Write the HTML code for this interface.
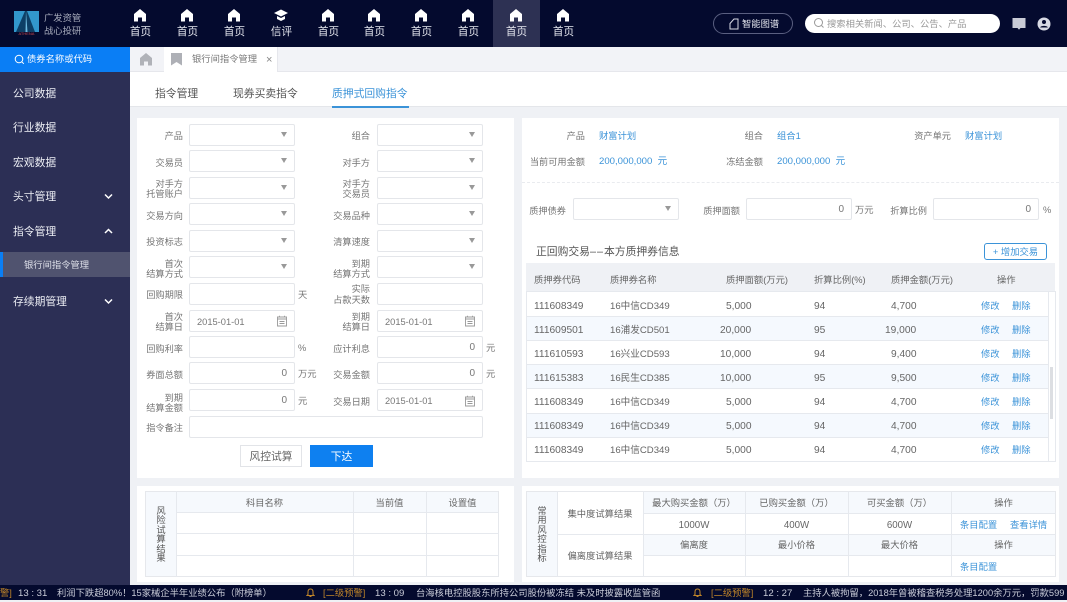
<!DOCTYPE html>
<html lang="zh"><head><meta charset="utf-8"><title>银行间指令管理</title>
<style>
*{box-sizing:border-box}
html,body{margin:0;padding:0}
body{width:1067px;height:600px;overflow:hidden;position:relative;background:#eff1f5;font-family:"Liberation Sans","Noto Sans CJK SC",sans-serif;font-size:9.3px;color:#666}
div,span,svg{position:absolute}
span span,div span{position:static}
.t{white-space:nowrap}
.nav{top:0;width:47px;height:47px;color:#e4e6ee;font-size:10.6px;text-align:center}
.nav svg{left:16px;top:8px}
.nav b{position:absolute;left:0;width:47px;top:24px;font-weight:400;line-height:16px}
.m{left:13px;color:#eceef4;font-size:10.8px;line-height:16px;white-space:nowrap;margin-top:1px}
.l{width:60px;text-align:right;line-height:10px;font-size:9.2px;color:#757575;white-space:nowrap;margin-top:-1px}
.i{width:106px;height:22px;background:#fff;border:1px solid #e4e6ea;border-radius:2px;font-size:9.3px;color:#777;line-height:20px}
.a:after{content:"";position:absolute;right:7px;top:7px;border-left:3px solid transparent;border-right:3px solid transparent;border-top:5px solid #999}
.n{text-align:right;padding-right:7px;font-size:10px;line-height:22px}
.d{padding-left:7px;line-height:22px}
.u{font-size:9.3px;color:#777;line-height:25px;white-space:nowrap}
.c{line-height:24px;white-space:nowrap;font-size:9.6px;color:#666;margin-top:1.5px}
.h{font-size:9.3px;margin-top:2.5px}
.o{font-size:9.3px;margin-top:.5px}
.e{font-size:10.2px}
.b{color:#3b93d8!important}
.bar{background:#e6e9ee}
.y{font-size:9.3px;line-height:21px;text-align:center;color:#666;white-space:nowrap;margin-top:2px}
.tk{top:585px;line-height:16px;font-size:9.3px;color:#c9ccd8;white-space:nowrap}
.tm{font-size:9.6px;top:586px}
.w{color:#c08529}
</style></head><body>

<!-- header -->
<div style="left:0;top:0;width:1067px;height:47px;background:#040a2e"></div>
<div style="left:14px;top:11px;width:25px;height:25px;overflow:hidden">
<svg width="25" height="25" viewBox="0 0 25 25" style="left:0;top:0"><path d="M0 0H25V21H0Z" fill="#3297cc"/><path d="M11 0L2 21H21L13 0Z" fill="#0d3f66"/><path d="M12 0L11.500 21H13.500Z" fill="#6fbbe0"/><rect y="21" width="25" height="4" fill="#040a2e"/></svg>
<span style="position:absolute;left:0;top:21px;width:25px;text-align:center;font-size:4px;line-height:4px;color:#c9484d" class="t">ATHENA</span></div>
<span class="t" style="left:44px;top:12px;font-size:9.300px;line-height:12px;color:#a9adbd">广发资管</span>
<span class="t" style="left:44px;top:25px;font-size:9.300px;line-height:12px;color:#a9adbd">战心投研</span>

<div style="left:493px;top:0;width:47px;height:47px;background:#2d3153"></div>
<div class="nav" style="left:117px"><svg width="14" height="14" viewBox="0 0 14 14"><path d="M7 1L13 6V13.500H9V9.500H5V13.500H1V6Z" fill="#fff"/></svg><b>首页</b></div>
<div class="nav" style="left:164px"><svg width="14" height="14" viewBox="0 0 14 14"><path d="M7 1L13 6V13.500H9V9.500H5V13.500H1V6Z" fill="#fff"/></svg><b>首页</b></div>
<div class="nav" style="left:211px"><svg width="14" height="14" viewBox="0 0 14 14"><path d="M7 1L13 6V13.500H9V9.500H5V13.500H1V6Z" fill="#fff"/></svg><b>首页</b></div>
<div class="nav" style="left:258px"><svg width="14" height="14" viewBox="0 0 14 14"><path d="M7 1.500L14 5L7 8.500L0 5ZM3 8L7 10L11 8V11L7 13L3 11Z" fill="#fff"/></svg><b>信评</b></div>
<div class="nav" style="left:305px"><svg width="14" height="14" viewBox="0 0 14 14"><path d="M7 1L13 6V13.500H9V9.500H5V13.500H1V6Z" fill="#fff"/></svg><b>首页</b></div>
<div class="nav" style="left:351px"><svg width="14" height="14" viewBox="0 0 14 14"><path d="M7 1L13 6V13.500H9V9.500H5V13.500H1V6Z" fill="#fff"/></svg><b>首页</b></div>
<div class="nav" style="left:398px"><svg width="14" height="14" viewBox="0 0 14 14"><path d="M7 1L13 6V13.500H9V9.500H5V13.500H1V6Z" fill="#fff"/></svg><b>首页</b></div>
<div class="nav" style="left:445px"><svg width="14" height="14" viewBox="0 0 14 14"><path d="M7 1L13 6V13.500H9V9.500H5V13.500H1V6Z" fill="#fff"/></svg><b>首页</b></div>
<div class="nav" style="left:493px"><svg width="14" height="14" viewBox="0 0 14 14"><path d="M7 1L13 6V13.500H9V9.500H5V13.500H1V6Z" fill="#fff"/></svg><b>首页</b></div>
<div class="nav" style="left:540px"><svg width="14" height="14" viewBox="0 0 14 14"><path d="M7 1L13 6V13.500H9V9.500H5V13.500H1V6Z" fill="#fff"/></svg><b>首页</b></div>

<div style="left:713px;top:13px;width:80px;height:21px;border:1px solid #5a5f80;border-radius:11px"></div>
<svg width="10" height="12" viewBox="0 0 10 12" style="left:729px;top:18px"><path d="M9 1H5L1 5.500V11H9Z" fill="none" stroke="#d8dae4" stroke-width="1"/></svg>
<span class="t" style="left:742px;top:17px;font-size:9.300px;line-height:15px;color:#e4e6ee">智能图谱</span>
<div style="left:805px;top:14px;width:195px;height:19px;background:#fff;border-radius:10px"></div>
<svg width="12" height="12" viewBox="0 0 12 12" style="left:813px;top:17px"><circle cx="5.500" cy="5.500" r="4" fill="none" stroke="#999" stroke-width="1"/><path d="M8.500 8.500L10.500 10.500" stroke="#999" stroke-width="1"/></svg>
<span class="t" style="left:827px;top:17px;font-size:9.300px;line-height:15px;color:#999">搜索相关新闻、公司、公告、产品</span>
<svg width="14" height="14" viewBox="0 0 14 14" style="left:1012px;top:17px"><path d="M0.500 1H13.500V11H8.500L7 12.800L5.500 11H0.500Z" fill="#c9cbd6"/></svg>
<svg width="14" height="14" viewBox="0 0 14 14" style="left:1037px;top:17px"><circle cx="7" cy="7" r="6.500" fill="#d8dae4"/><circle cx="7" cy="5" r="2" fill="#040a2e"/><path d="M3.200 10.500C3.600 8.400 10.400 8.400 10.800 10.500Z" fill="#040a2e"/></svg>

<!-- sidebar -->
<div style="left:0;top:47px;width:130px;height:538px;background:#2c2f55"></div>
<div style="left:0;top:47px;width:130px;height:25px;background:#0a7ef5"></div>
<svg width="11" height="11" viewBox="0 0 11 11" style="left:14px;top:54px"><circle cx="5" cy="5" r="3.800" fill="none" stroke="#fff" stroke-width="1"/><path d="M7.800 7.800L9.800 9.800" stroke="#fff" stroke-width="1"/></svg>
<span class="t" style="left:27px;top:52px;color:#fff;font-size:9.300px;line-height:15px">债券名称或代码</span>
<span class="m" style="top:85px">公司数据</span>
<span class="m" style="top:119px">行业数据</span>
<span class="m" style="top:154px">宏观数据</span>
<span class="m" style="top:188px">头寸管理</span>
<span class="m" style="top:223px">指令管理</span>
<span class="m" style="top:293px">存续期管理</span>
<div style="left:0;top:252px;width:130px;height:25px;background:#50536f"></div>
<div style="left:0;top:252px;width:3px;height:25px;background:#0a7ef5"></div>
<span class="t" style="left:24px;top:258px;color:#dfe1ea;font-size:9.300px;line-height:14px">银行间指令管理</span>
<svg width="9" height="7" viewBox="0 0 9 7" style="left:104px;top:193px"><path d="M1 1.500L4.500 5L8 1.500" fill="none" stroke="#fff" stroke-width="1.500"/></svg>
<svg width="9" height="7" viewBox="0 0 9 7" style="left:104px;top:228px"><path d="M1 5L4.500 1.500L8 5" fill="none" stroke="#fff" stroke-width="1.500"/></svg>
<svg width="9" height="7" viewBox="0 0 9 7" style="left:104px;top:298px"><path d="M1 1.500L4.500 5L8 1.500" fill="none" stroke="#fff" stroke-width="1.500"/></svg>

<!-- tabs -->
<div style="left:130px;top:47px;width:937px;height:25px;background:#f2f3f7;border-bottom:1px solid #e6e7ec"></div>
<svg width="14" height="14" viewBox="0 0 14 14" style="left:139px;top:52px"><path d="M7 1L13 6V13.500H9V9.500H5V13.500H1V6Z" fill="#b0b2b8"/></svg>
<div style="left:164px;top:47px;width:114px;height:25px;background:#fff;border-right:1px solid #e6e7ec"></div>
<svg width="12" height="13" viewBox="0 0 12 13" style="left:171px;top:53px"><path d="M0 0H11V12.500L5.500 9L0 12.500Z" fill="#aeb0b6"/></svg>
<span class="t" style="left:192px;top:52px;color:#777;font-size:9.300px;line-height:15px">银行间指令管理</span>
<span class="t" style="left:266px;top:53px;color:#888;font-size:11px;line-height:15px">×</span>
<div style="left:130px;top:72px;width:937px;height:35px;background:#fff;border-bottom:1px solid #e4e6ea"></div>
<span class="t" style="left:155px;top:86px;font-size:10.800px;line-height:16px;color:#555">指令管理</span>
<span class="t" style="left:233px;top:86px;font-size:10.800px;line-height:16px;color:#555">现券买卖指令</span>
<span class="t" style="left:332px;top:86px;font-size:10.800px;line-height:16px;color:#3b93d8">质押式回购指令</span>
<div style="left:332px;top:106px;width:77px;height:2px;background:#3b93d8"></div>

<!-- left panel -->
<div style="left:137px;top:118px;width:377px;height:360px;background:#fff"></div>

<span class="l" style="left:123px;top:132px">产品</span><div class="i a" style="left:189px;top:124px"></div>
<span class="l" style="left:310px;top:132px">组合</span><div class="i a" style="left:377px;top:124px"></div>
<span class="l" style="left:123px;top:159px">交易员</span><div class="i a" style="left:189px;top:150px"></div>
<span class="l" style="left:310px;top:159px">对手方</span><div class="i a" style="left:377px;top:150px"></div>
<span class="l" style="left:123px;top:180px">对手方<br>托管账户</span><div class="i a" style="left:189px;top:177px"></div>
<span class="l" style="left:310px;top:180px">对手方<br>交易员</span><div class="i a" style="left:377px;top:177px"></div>
<span class="l" style="left:123px;top:212px">交易方向</span><div class="i a" style="left:189px;top:203px"></div>
<span class="l" style="left:310px;top:212px">交易品种</span><div class="i a" style="left:377px;top:203px"></div>
<span class="l" style="left:123px;top:238px">投资标志</span><div class="i a" style="left:189px;top:230px"></div>
<span class="l" style="left:310px;top:238px">清算速度</span><div class="i a" style="left:377px;top:230px"></div>
<span class="l" style="left:123px;top:260px">首次<br>结算方式</span><div class="i a" style="left:189px;top:256px"></div>
<span class="l" style="left:310px;top:260px">到期<br>结算方式</span><div class="i a" style="left:377px;top:256px"></div>
<span class="l" style="left:123px;top:291px">回购期限</span><div class="i" style="left:189px;top:283px"></div><span class="u" style="left:298px;top:283px">天</span>
<span class="l" style="left:310px;top:285px;line-height:10.500px">实际<br>占款天数</span><div class="i" style="left:377px;top:283px"></div>
<span class="l" style="left:123px;top:313px">首次<br>结算日</span><div class="i d" style="left:189px;top:310px">2015-01-01</div>
<span class="l" style="left:310px;top:313px">到期<br>结算日</span><div class="i d" style="left:377px;top:310px">2015-01-01</div>
<span class="l" style="left:123px;top:345px">回购利率</span><div class="i" style="left:189px;top:336px"></div><span class="u" style="left:298px;top:336px">%</span>
<span class="l" style="left:310px;top:345px">应计利息</span><div class="i n" style="left:377px;top:336px">0</div><span class="u" style="left:486px;top:336px">元</span>
<span class="l" style="left:123px;top:371px">券面总额</span><div class="i n" style="left:189px;top:362px">0</div><span class="u" style="left:298px;top:362px">万元</span>
<span class="l" style="left:310px;top:371px">交易金额</span><div class="i n" style="left:377px;top:362px">0</div><span class="u" style="left:486px;top:362px">元</span>
<span class="l" style="left:123px;top:394px">到期<br>结算金额</span><div class="i n" style="left:189px;top:389px">0</div><span class="u" style="left:298px;top:389px">元</span>
<span class="l" style="left:310px;top:398px">交易日期</span><div class="i d" style="left:377px;top:389px">2015-01-01</div>
<span class="l" style="left:123px;top:424px">指令备注</span><div class="i" style="left:189px;top:416px;width:294px"></div>

<svg width="12" height="12" viewBox="0 0 12 12" style="left:276px;top:315px"><path d="M1.500 2H10.500V11H1.500ZM1.500 4H10.500M3.500 6.500H8.500M3.500 8.500H8.500M3.500 .8V2M8.500 .8V2" fill="none" stroke="#999" stroke-width=".9"/></svg>
<svg width="12" height="12" viewBox="0 0 12 12" style="left:464px;top:315px"><path d="M1.500 2H10.500V11H1.500ZM1.500 4H10.500M3.500 6.500H8.500M3.500 8.500H8.500M3.500 .8V2M8.500 .8V2" fill="none" stroke="#999" stroke-width=".9"/></svg>
<svg width="12" height="12" viewBox="0 0 12 12" style="left:464px;top:395px"><path d="M1.500 2H10.500V11H1.500ZM1.500 4H10.500M3.500 6.500H8.500M3.500 8.500H8.500M3.500 .8V2M8.500 .8V2" fill="none" stroke="#999" stroke-width=".9"/></svg>

<div style="left:240px;top:445px;width:62px;height:22px;background:#fff;border:1px solid #e2e4e8;text-align:center;font-size:10.800px;line-height:22px;color:#666">风控试算</div>
<div style="left:310px;top:445px;width:63px;height:22px;background:#0e80f0;text-align:center;font-size:10.800px;line-height:24px;color:#fff">下达</div>

<!-- right panel -->
<div style="left:522px;top:118px;width:537px;height:360px;background:#fff"></div>
<span class="l" style="left:525px;top:132px">产品</span><span class="t b" style="left:599px;top:131px;line-height:10px">财富计划</span>
<span class="l" style="left:703px;top:132px">组合</span><span class="t b" style="left:777px;top:131px;line-height:10px">组合1</span>
<span class="l" style="left:891px;top:132px">资产单元</span><span class="t b" style="left:965px;top:131px;line-height:10px">财富计划</span>
<span class="l" style="left:525px;top:158px">当前可用金额</span><span class="t b" style="left:599px;top:157px;line-height:10px;font-size:9.600px">200,000,000&nbsp; 元</span>
<span class="l" style="left:703px;top:158px">冻结金额</span><span class="t b" style="left:777px;top:157px;line-height:10px;font-size:9.600px">200,000,000&nbsp; 元</span>
<div style="left:522px;top:182px;width:537px;height:0;border-top:1px dashed #e9ebef"></div>

<span class="l" style="left:506px;top:207px">质押债券</span><div class="i a" style="left:573px;top:198px"></div>
<span class="l" style="left:680px;top:207px">质押面额</span><div class="i n" style="left:746px;top:198px">0</div><span class="u" style="left:855px;top:198px">万元</span>
<span class="l" style="left:867px;top:207px">折算比例</span><div class="i n" style="left:933px;top:198px">0</div><span class="u" style="left:1043px;top:198px">%</span>

<span class="t" style="left:536px;top:244px;font-size:10.800px;line-height:16px;color:#555">正回购交易<span style="letter-spacing:1px">––</span>本方质押券信息</span>
<div style="left:984px;top:243px;width:63px;height:17px;border:1px solid #3b93d8;border-radius:3px;color:#3b93d8;font-size:9.300px;line-height:16px;text-align:center;white-space:nowrap">+ 增加交易</div>

<div style="left:526px;top:263px;width:529px;height:28px;background:#eff1f5"></div>
<div class="c h" style="left:534px;top:265px">质押券代码</div>
<div class="c h" style="left:610px;top:265px">质押券名称</div>
<div class="c h" style="left:726px;top:265px">质押面额(万元)</div>
<div class="c h" style="left:814px;top:265px">折算比例(%)</div>
<div class="c h" style="left:891px;top:265px">质押金额(万元)</div>
<div class="c h" style="left:997px;top:265px">操作</div>

<div style="left:526px;top:316px;width:522px;height:24px;background:#f5f9fe"></div>
<div style="left:526px;top:365px;width:522px;height:24px;background:#f5f9fe"></div>
<div style="left:526px;top:413px;width:522px;height:24px;background:#f5f9fe"></div>
<div class="bar" style="left:526px;top:291px;width:529px;height:1px"></div>
<div class="bar" style="left:526px;top:316px;width:522px;height:1px"></div>
<div class="bar" style="left:526px;top:340px;width:522px;height:1px"></div>
<div class="bar" style="left:526px;top:364px;width:522px;height:1px"></div>
<div class="bar" style="left:526px;top:388px;width:522px;height:1px"></div>
<div class="bar" style="left:526px;top:413px;width:522px;height:1px"></div>
<div class="bar" style="left:526px;top:437px;width:522px;height:1px"></div>
<div class="bar" style="left:526px;top:461px;width:529px;height:1px"></div>
<div class="bar" style="left:526px;top:291px;width:1px;height:171px"></div>
<div class="bar" style="left:1048px;top:291px;width:1px;height:171px"></div>
<div class="bar" style="left:1055px;top:291px;width:1px;height:171px"></div>
<div style="left:1050px;top:367px;width:3px;height:52px;background:#dcdee2"></div>

<div class="c e" style="left:534px;top:293px">111608349</div><div class="c" style="left:610px;top:293px">16中信CD349</div><div class="c e" style="left:726px;top:293px">5,000</div><div class="c e" style="left:814px;top:293px">94</div><div class="c e" style="left:891px;top:293px">4,700</div><div class="c o b" style="left:981px;top:293px">修改</div><div class="c o b" style="left:1012px;top:293px">删除</div>
<div class="c e" style="left:534px;top:317px">111609501</div><div class="c" style="left:610px;top:317px">16浦发CD501</div><div class="c e" style="left:720px;top:317px">20,000</div><div class="c e" style="left:814px;top:317px">95</div><div class="c e" style="left:885px;top:317px">19,000</div><div class="c o b" style="left:981px;top:317px">修改</div><div class="c o b" style="left:1012px;top:317px">删除</div>
<div class="c e" style="left:534px;top:341px">111610593</div><div class="c" style="left:610px;top:341px">16兴业CD593</div><div class="c e" style="left:720px;top:341px">10,000</div><div class="c e" style="left:814px;top:341px">94</div><div class="c e" style="left:891px;top:341px">9,400</div><div class="c o b" style="left:981px;top:341px">修改</div><div class="c o b" style="left:1012px;top:341px">删除</div>
<div class="c e" style="left:534px;top:365px">111615383</div><div class="c" style="left:610px;top:365px">16民生CD385</div><div class="c e" style="left:720px;top:365px">10,000</div><div class="c e" style="left:814px;top:365px">95</div><div class="c e" style="left:891px;top:365px">9,500</div><div class="c o b" style="left:981px;top:365px">修改</div><div class="c o b" style="left:1012px;top:365px">删除</div>
<div class="c e" style="left:534px;top:389px">111608349</div><div class="c" style="left:610px;top:389px">16中信CD349</div><div class="c e" style="left:726px;top:389px">5,000</div><div class="c e" style="left:814px;top:389px">94</div><div class="c e" style="left:891px;top:389px">4,700</div><div class="c o b" style="left:981px;top:389px">修改</div><div class="c o b" style="left:1012px;top:389px">删除</div>
<div class="c e" style="left:534px;top:413px">111608349</div><div class="c" style="left:610px;top:413px">16中信CD349</div><div class="c e" style="left:726px;top:413px">5,000</div><div class="c e" style="left:814px;top:413px">94</div><div class="c e" style="left:891px;top:413px">4,700</div><div class="c o b" style="left:981px;top:413px">修改</div><div class="c o b" style="left:1012px;top:413px">删除</div>
<div class="c e" style="left:534px;top:437px">111608349</div><div class="c" style="left:610px;top:437px">16中信CD349</div><div class="c e" style="left:726px;top:437px">5,000</div><div class="c e" style="left:814px;top:437px">94</div><div class="c e" style="left:891px;top:437px">4,700</div><div class="c o b" style="left:981px;top:437px">修改</div><div class="c o b" style="left:1012px;top:437px">删除</div>

<!-- bottom left -->
<div style="left:137px;top:486px;width:377px;height:96px;background:#fff"></div>
<div style="left:145px;top:491px;width:354px;height:86px;border:1px solid #e6e8ec"></div>
<div style="left:146px;top:492px;width:30px;height:84px;background:#f6f9fd"></div>
<div style="left:176px;top:492px;width:322px;height:20px;background:#f6f9fd"></div>
<div class="bar" style="left:176px;top:491px;width:1px;height:86px"></div>
<div class="bar" style="left:353px;top:491px;width:1px;height:86px"></div>
<div class="bar" style="left:426px;top:491px;width:1px;height:86px"></div>
<div class="bar" style="left:176px;top:512px;width:323px;height:1px"></div>
<div class="bar" style="left:176px;top:533px;width:323px;height:1px"></div>
<div class="bar" style="left:176px;top:555px;width:323px;height:1px"></div>
<span class="y" style="left:176px;top:491px;width:177px">科目名称</span>
<span class="y" style="left:353px;top:491px;width:73px">当前值</span>
<span class="y" style="left:426px;top:491px;width:73px">设置值</span>
<span style="left:155px;top:507px;width:12px;font-size:9.300px;line-height:9.400px;text-align:center;color:#555">风险试算结果</span>

<!-- bottom right -->
<div style="left:522px;top:486px;width:537px;height:96px;background:#fff"></div>
<div style="left:526px;top:491px;width:530px;height:86px;border:1px solid #e6e8ec"></div>
<div style="left:527px;top:492px;width:30px;height:84px;background:#f6f9fd"></div>
<div style="left:557px;top:492px;width:498px;height:21px;background:#f6f9fd"></div>
<div style="left:557px;top:534px;width:498px;height:21px;background:#f6f9fd"></div>
<div style="left:557px;top:492px;width:86px;height:84px;background:#fff"></div>
<div class="bar" style="left:557px;top:491px;width:1px;height:86px"></div>
<div class="bar" style="left:643px;top:491px;width:1px;height:86px"></div>
<div class="bar" style="left:745px;top:491px;width:1px;height:86px"></div>
<div class="bar" style="left:848px;top:491px;width:1px;height:86px"></div>
<div class="bar" style="left:951px;top:491px;width:1px;height:86px"></div>
<div class="bar" style="left:643px;top:513px;width:413px;height:1px"></div>
<div class="bar" style="left:557px;top:534px;width:499px;height:1px"></div>
<div class="bar" style="left:643px;top:555px;width:413px;height:1px"></div>
<span style="left:536px;top:507px;width:12px;font-size:9.300px;line-height:9.400px;text-align:center;color:#555">常用风控指标</span>
<span class="y" style="left:557px;top:502px;width:86px">集中度试算结果</span>
<span class="y" style="left:557px;top:544px;width:86px">偏离度试算结果</span>
<span class="y" style="left:643px;top:491px;width:102px">最大购买金额（万）</span>
<span class="y" style="left:745px;top:491px;width:103px">已购买金额（万）</span>
<span class="y" style="left:848px;top:491px;width:103px">可买金额（万）</span>
<span class="y" style="left:951px;top:491px;width:105px">操作</span>
<span class="y" style="left:643px;top:513px;width:102px;font-size:9.700px">1000W</span>
<span class="y" style="left:745px;top:513px;width:103px;font-size:9.700px">400W</span>
<span class="y" style="left:848px;top:513px;width:103px;font-size:9.700px">600W</span>
<span class="y b" style="left:960px;top:513px">条目配置</span>
<span class="y b" style="left:1010px;top:513px">查看详情</span>
<span class="y" style="left:643px;top:533px;width:102px">偏离度</span>
<span class="y" style="left:745px;top:533px;width:103px">最小价格</span>
<span class="y" style="left:848px;top:533px;width:103px">最大价格</span>
<span class="y" style="left:951px;top:533px;width:105px">操作</span>
<span class="y b" style="left:960px;top:555px">条目配置</span>

<!-- ticker -->
<div style="left:0;top:585px;width:1067px;height:15px;background:#040a2e"></div>
<span class="tk w" style="left:0">警]</span>
<span class="tk tm" style="left:18px">13 : 31</span>
<span class="tk" style="left:57px">利润下跌超80%！15家械企半年业绩公布（附榜单）</span>
<svg width="9" height="10" viewBox="0 0 9 10" style="left:306px;top:588px"><path d="M4.500 1C2.500 1 2 2.500 2 4V6.500L1 7.500H8L7 6.500V4C7 2.500 6.500 1 4.500 1ZM3.500 8.500H5.500" fill="none" stroke="#c08529" stroke-width="1"/></svg>
<span class="tk w" style="left:323px">[二级预警]</span>
<span class="tk tm" style="left:375px">13 : 09</span>
<span class="tk" style="left:416px">台海核电控股股东所持公司股份被冻结 未及时披露收监管函</span>
<svg width="9" height="10" viewBox="0 0 9 10" style="left:693px;top:588px"><path d="M4.500 1C2.500 1 2 2.500 2 4V6.500L1 7.500H8L7 6.500V4C7 2.500 6.500 1 4.500 1ZM3.500 8.500H5.500" fill="none" stroke="#c08529" stroke-width="1"/></svg>
<span class="tk w" style="left:711px">[二级预警]</span>
<span class="tk tm" style="left:763px">12 : 27</span>
<span class="tk" style="left:803px">主持人被拘留，2018年曾被稽查税务处理1200余万元，罚款599</span>
</body></html>
